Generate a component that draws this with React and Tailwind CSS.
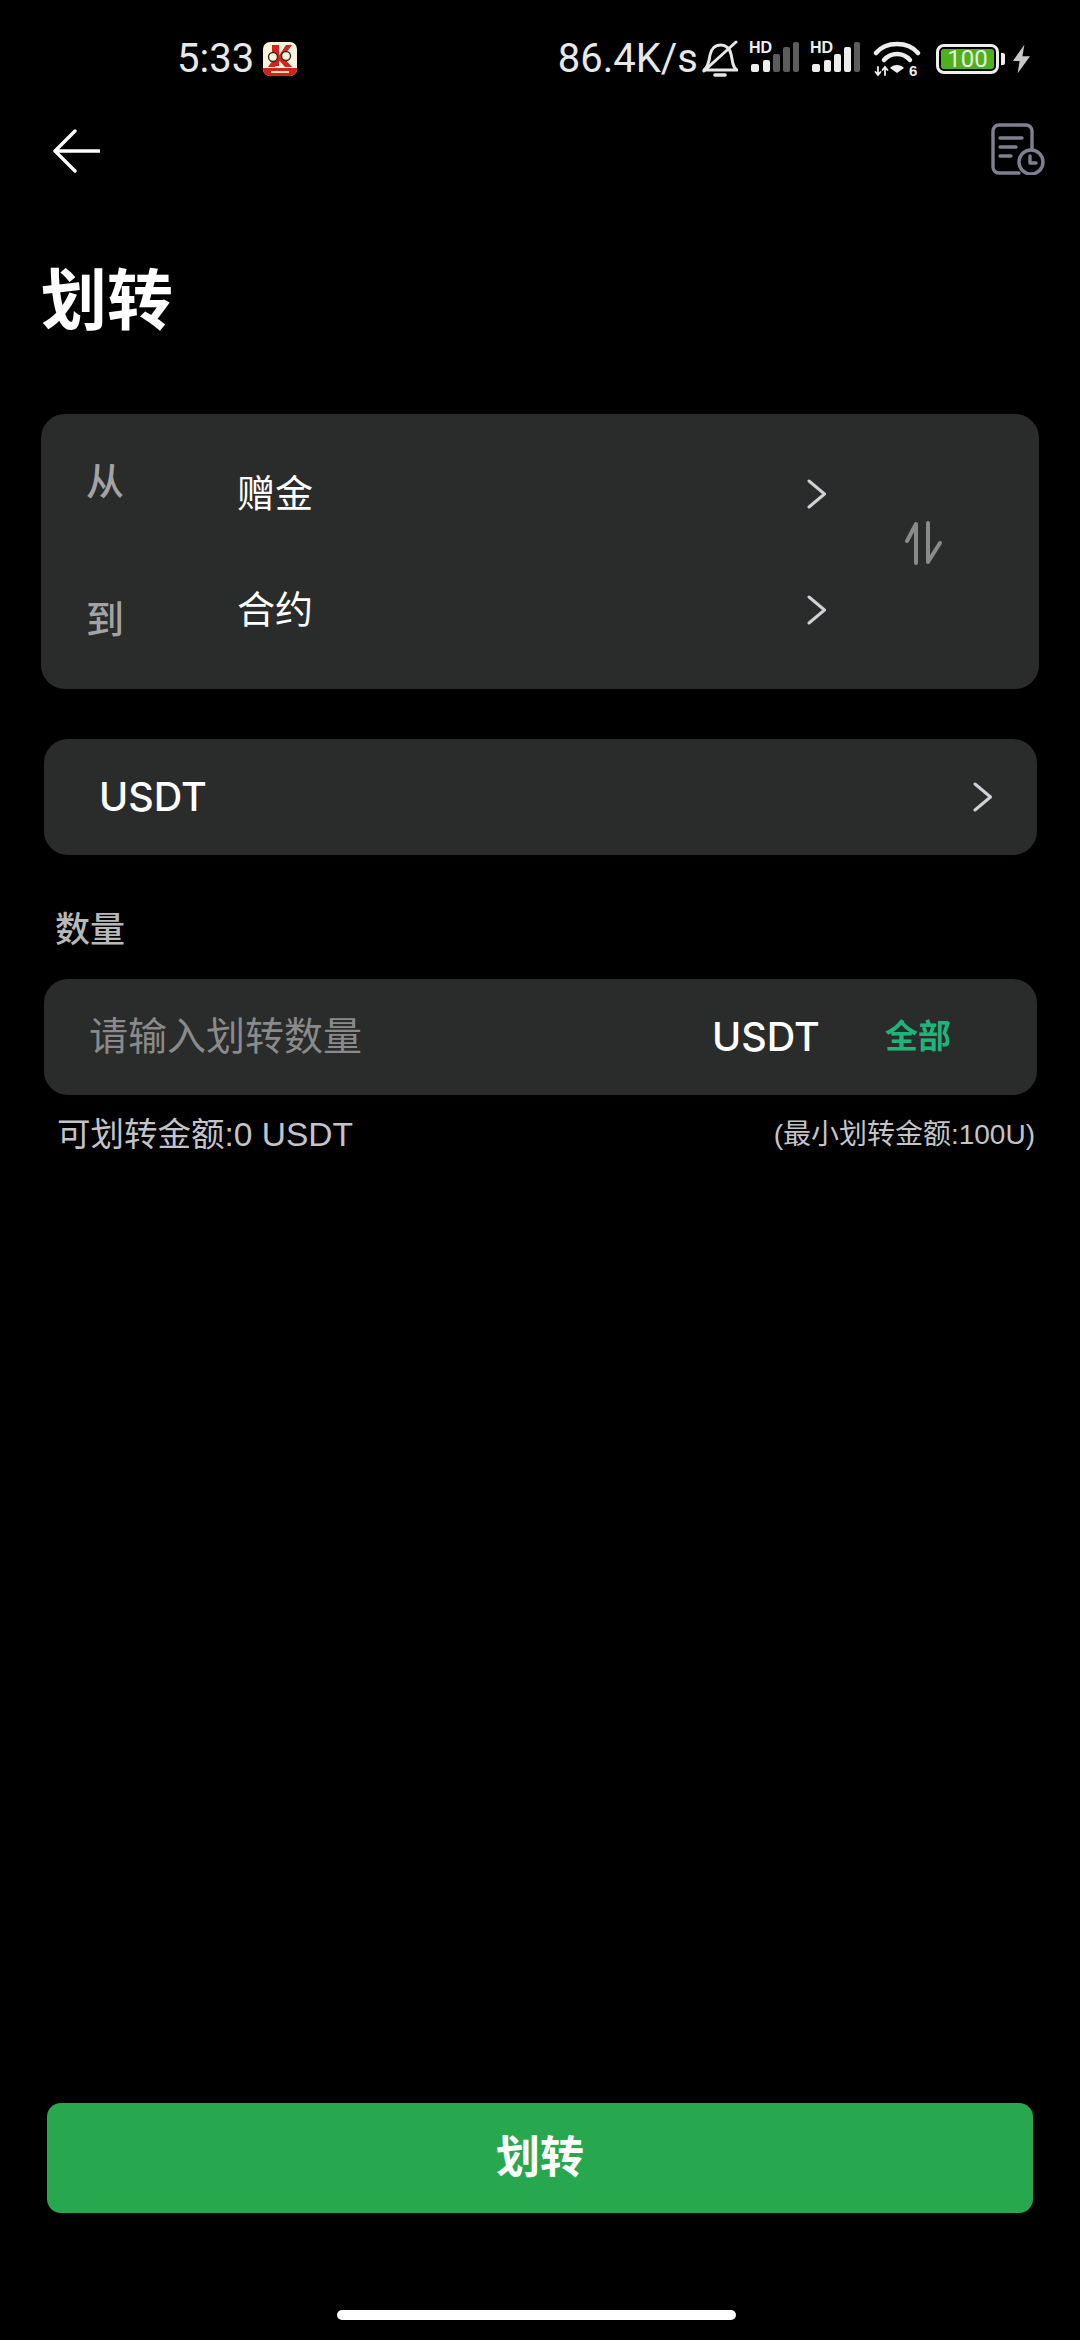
const cjk = 'font-["Liberation_Sans","Noto_Sans_CJK_SC",sans-serif]';

function Chevron({ className }) {
  return (
    <svg viewBox="0 0 20 30" className={className} fill="none" stroke="#d0d0d6" strokeWidth="3" strokeLinecap="round" strokeLinejoin="round">
      <path d="M2 2 L17.5 15 L2 28" />
    </svg>
  );
}

function AppBadge() {
  return (
    <svg viewBox="0 0 34 34" className="ml-[9px] h-[34px] w-[34px]">
      <rect width="34" height="34" rx="7" fill="#fbf3dc" />
      <path d="M0 26 H34 V27 A7 7 0 0 1 27 34 H7 A7 7 0 0 1 0 27 Z" fill="#c9261c" />
      <path d="M9 3 H16 V24 H9 Z" fill="#d32420" />
      <path d="M17 12 L23 3 H29 L20 15 L29 25 H22 L14 16 Z" fill="#d32420" />
      <path d="M12 15 L5 25 H12 L17 18 Z" fill="#d32420" />
      <circle cx="10" cy="15" r="4.5" fill="#fbf3dc" stroke="#3b2a20" strokeWidth="1.4" />
      <circle cx="23" cy="14" r="4.5" fill="#fbf3dc" stroke="#3b2a20" strokeWidth="1.4" />
      <rect x="8" y="29" width="18" height="2" fill="#f6d9a8" />
    </svg>
  );
}

function Signal({ weak }) {
  const dim = '#5c5c5c';
  return (
    <svg viewBox="0 -4 50 44" className="-my-[4px] h-[44px] w-[50px]">
      <text x="0" y="12" fontSize="16" fontWeight="700" fill="#eee" fontFamily="Liberation Sans, sans-serif">HD</text>
      <rect x="2" y="23" width="8" height="8" rx="2" fill="#eee" />
      <rect x="14" y="19" width="7" height="12" rx="2" fill="#eee" />
      <rect x="24" y="13" width="7" height="18" rx="2" fill={weak ? dim : '#eee'} />
      <rect x="34" y="6" width="7" height="25" rx="2" fill={weak ? dim : '#eee'} />
      <rect x="44" y="1" width="6" height="30" rx="2" fill={dim} />
    </svg>
  );
}

function StatusBar() {
  return (
    <div className="flex h-[79px] shrink-0 items-end justify-between pl-[177px] pr-[49px] text-[#e8e8e8]">
      <div className="flex items-center">
        <span className='font-["Roboto",sans-serif] text-[40px] leading-[40px]'>5:33</span>
        <AppBadge />
      </div>
      <div className="flex items-center">
        <span className='shrink-0 whitespace-nowrap font-["Roboto",sans-serif] text-[40px] leading-[48px] -my-[4px]'>86.4K/s</span>
        <svg viewBox="0 0 36 38" className="ml-[4px] h-[38px] w-[36px]" fill="none" stroke="#e8e8e8" strokeWidth="3" strokeLinecap="round" strokeLinejoin="round">
          <path d="M2 30 C7 26 7 20 8 15 C9 9 13 5 19 5 C24 5 28 9 29 14 L31 24 C32 27 33 29 35 30 Z" />
          <path d="M13 35 H23" strokeWidth="3.6" />
          <path d="M2 31 L34 2" />
        </svg>
        <div className="ml-[11px] flex h-[36px] items-center"><Signal weak /></div>
        <div className="ml-[11px] flex h-[36px] items-center"><Signal /></div>
        <svg viewBox="0 -4 48 44" className="-my-[4px] ml-[13px] h-[44px] w-[48px]" fill="none" stroke="#eee" strokeWidth="4.4" strokeLinecap="round">
          <path d="M3 12 C13 0 35 0 45 12" />
          <path d="M11 19 C18 11 30 11 37 19" />
          <path d="M17 27 C20 23 28 23 31 27 L24 32 Z" fill="#eee" stroke="none" />
          <path d="M5 26 V34 M2.500 31 L5 34 L7.500 31 M12 34 V26 M9.500 29 L12 26 L14.500 29" strokeWidth="1.8" />
          <text x="36" y="35" fontSize="15" fontWeight="700" fill="#eee" stroke="none" fontFamily="Liberation Sans, sans-serif">6</text>
        </svg>
        <div className="ml-[15px] flex h-[30px] w-[63px] items-center justify-center rounded-[8px] border-[3px] border-[#eee] p-[2px]">
          <span className='flex h-full w-full items-center justify-center rounded-[3px] bg-[#4eb01e] font-["Roboto",sans-serif] text-[24px] leading-none text-[#e8f5df]'>100</span>
        </div>
        <span className="ml-[2px] h-[12px] w-[4px] rounded-r-[2px] bg-[#eee]" />
        <svg viewBox="0 0 20 30" className="ml-[7px] h-[30px] w-[19px]">
          <path d="M13 0 L1 17 H8 L6 30 L19 12 H11 Z" fill="#c8c8c8" />
        </svg>
      </div>
    </div>
  );
}

function NavBar() {
  return (
    <div className="flex h-[52px] shrink-0 items-center justify-between pl-[52px] pr-[35px]">
      <svg viewBox="0 0 48 44" className="mt-[4px] h-[44px] w-[48px]" fill="none" stroke="#fff" strokeWidth="3.4" strokeLinecap="round" strokeLinejoin="round">
        <path d="M23 2 L3 22 L23 42 M3 22 H47" />
      </svg>
      <svg viewBox="0 0 54 52" className="h-[52px] w-[54px]" fill="none" stroke="#7f808f" strokeWidth="3.4" strokeLinecap="round" strokeLinejoin="round">
        <path d="M41 26 V8 A6 6 0 0 0 35 2 H8 A6 6 0 0 0 2 8 V44 A6 6 0 0 0 8 50 H28" />
        <path d="M9 15 H31 M9 24 H25 M9 33 H20" />
        <circle cx="40" cy="39" r="12" fill="#000" />
        <path d="M39 33 V40 H45" />
      </svg>
    </div>
  );
}

function Row({ className, children }) {
  return <div className={`rounded-[24px] bg-[#2a2b2b] ${className}`}>{children}</div>;
}

export default function App() {
  return (
    <div className={`flex h-[2340px] w-[1080px] flex-col bg-black ${cjk}`}>
      <StatusBar />
      <div className="mt-[44px]"><NavBar /></div>
      <h1 className="ml-[41px] mt-[86px] text-[66px] font-bold leading-[80px] text-white">划转</h1>

      {/* from / to card */}
      <Row className="ml-[41px] mt-[73px] flex h-[275px] w-[998px] items-start pl-[45px]">
        <div className="flex w-[151px] flex-col gap-[100px] pt-[49px] text-[38px] font-medium leading-[38px] text-[#a3a3a3]">
          <span>从</span>
          <span>到</span>
        </div>
        <div className="flex w-[590px] flex-col gap-[56px] pt-[50px] text-[38px] leading-[60px] text-white">
          <div className="flex items-center justify-between">
            <span>赠金</span>
            <Chevron className="h-[30px] w-[20px]" />
          </div>
          <div className="flex items-center justify-between">
            <span>合约</span>
            <Chevron className="h-[30px] w-[20px]" />
          </div>
        </div>
        <svg viewBox="0 0 38 44" className="ml-[78px] mt-[107px] h-[44px] w-[38px]" fill="none" stroke="#8a8a8a" strokeWidth="4" strokeLinecap="round" strokeLinejoin="round">
          <path d="M11 42 V3 L2 20" />
          <path d="M23 2 V41 L35 22" />
        </svg>
      </Row>

      {/* coin picker */}
      <Row className="ml-[44px] mt-[50px] flex h-[116px] w-[993px] items-center justify-between pl-[55px] pr-[44px]">
        <span className='font-["Inter",sans-serif] text-[39.5px] font-medium leading-[48px] text-white'>USDT</span>
        <Chevron className="h-[30px] w-[20px]" />
      </Row>

      <div className="ml-[55px] mt-[54px] text-[35px] font-medium leading-[42px] text-[#b8b8b8]">数量</div>

      {/* amount input */}
      <Row className="ml-[44px] mt-[28px] flex h-[116px] w-[993px] items-center pl-[45px]">
        <span className="w-[623px] text-[39px] leading-[48px] text-[#8a8a8a]">请输入划转数量</span>
        <span className='w-[173px] font-["Inter",sans-serif] text-[39.5px] font-medium leading-[48px] text-white'>USDT</span>
        <span className="text-[33px] font-bold leading-[48px] text-[#1fb57a]">全部</span>
      </Row>

      <div className="mt-[18px] flex items-center justify-between pl-[57px] pr-[45px] text-[#c4c4c8]">
        <span className="text-[33.5px] leading-[44px]">可划转金额:0 USDT</span>
        <span className="text-[28px] leading-[44px]">(最小划转金额:100U)</span>
      </div>

      {/* submit */}
      <button className="ml-[47px] mt-auto flex h-[110px] w-[986px] items-center justify-center rounded-[14px] bg-[#27a84f] text-[44px] font-bold text-white">
        划转
      </button>
      <div className="mb-[20px] ml-[337px] mt-[97px] h-[10px] w-[399px] rounded-full bg-white" />
    </div>
  );
}
